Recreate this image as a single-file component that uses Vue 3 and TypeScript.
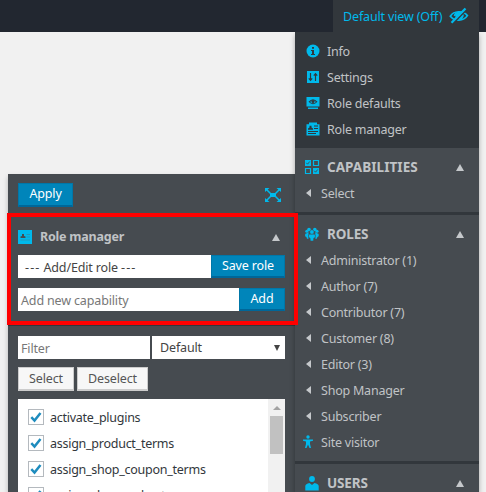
<script setup lang="ts">
const links = [
  { icon: 'info', label: 'Info' },
  { icon: 'settings', label: 'Settings' },
  { icon: 'defaults', label: 'Role defaults' },
  { icon: 'manager', label: 'Role manager' },
]
const roles: string[] = [
  'Administrator (1)', 'Author (7)', 'Contributor (7)', 'Customer (8)',
  'Editor (3)', 'Shop Manager', 'Subscriber',
]
const capabilities: string[] = [
  'activate_plugins', 'assign_product_terms', 'assign_shop_coupon_terms', 'assign_shop_order_terms',
]
</script>

<template>
  <div class="page">
    <header class="topbar">
      <div class="view-toggle">
        <span class="toggle-text">Default view (Off)</span>
        <svg class="eye" width="20" height="18" viewBox="0 0 20 18">
          <path d="M1.300 9.200C5 3.600 14 3.200 18.400 8.600C14.500 14.400 5.500 14.600 1.300 9.200Z" fill="none" stroke="#00b9eb" stroke-width="1.700" />
          <circle cx="10.500" cy="8.600" r="4.200" fill="#00b9eb" />
          <path d="M5.500 9Q6 6 9 5.500" fill="none" stroke="#00b9eb" stroke-width="1.600" />
          <path d="M3.600 16.800L17.500 2.600" stroke="#32373c" stroke-width="1.800" />
          <path d="M2.500 15.800L16.500 1.500" stroke="#00b9eb" stroke-width="2.300" />
        </svg>
      </div>
    </header>

    <aside class="menu">
      <nav class="links">
        <a v-for="l in links" :key="l.label" class="link">
          <svg width="14" height="14" viewBox="0 0 14 14">
            <g v-if="l.icon === 'info'">
              <circle cx="7" cy="7" r="6.500" fill="#00b9eb" />
              <path d="M6 3h2v1.800H6zM5 6h3v4h1v1H5v-1h1V7H5z" fill="#32373c" />
            </g>
            <g v-else-if="l.icon === 'settings'">
              <rect x="1" y="1" width="12" height="12" fill="#00b9eb" />
              <path d="M4.500 3v7M2.800 8.300l1.700 2 1.700-2M9.500 11V4M7.800 5.700l1.700-2 1.700 2" fill="none" stroke="#32373c" stroke-width="1.200" />
            </g>
            <g v-else-if="l.icon === 'defaults'">
              <path d="M.5 1h13v9.500H.5zM2 11.500h10V13H2z" fill="#00b9eb" />
              <path d="M2.500 5.800Q7 .8 11.500 5.800Q7 10.500 2.500 5.800Z" fill="#32373c" />
              <path d="M4 5.900Q7 3 10 5.900Q7 8.800 4 5.900Z" fill="#00b9eb" />
              <circle cx="7" cy="5.600" r="1.500" fill="#32373c" />
            </g>
            <g v-else>
              <path d="M.5 2.200H3V.5h8v1.700h2.500v11.300H.5z" fill="#00b9eb" />
              <path d="M2 7.800V6.500l1.500-1V3.800h2v1.700l1.500 1v1.300zM8 3.500h4v1H8zM8 6h4v1H8zM2 9h10v1H2zM2 11h8v1H2z" fill="#32373c" />
            </g>
          </svg>
          <span>{{ l.label }}</span>
        </a>
      </nav>

      <section class="group caps">
        <h2 class="heading">
          <svg width="16" height="16" viewBox="0 0 16 16">
            <path d="M1 1h6v6H1zM9 9h6v6H9z" fill="#00b9eb" />
            <path d="M9.500 1.500h5v5h-5zM1.500 9.500h5v5h-5z" fill="none" stroke="#00b9eb" stroke-width="1.200" />
            <path d="M2.300 3.800L3.600 5.200L5.700 2.500M10.300 11.800l1.300 1.400L13.700 10.500" fill="none" stroke="#464b50" stroke-width=".9" />
          </svg>
          <span class="wide">CAPABILITIES</span><i class="up"></i>
        </h2>
        <div class="item"><i class="left"></i><span>Select</span></div>
      </section>

      <section class="group">
        <h2 class="heading">
          <svg width="16" height="16" viewBox="0 0 16 16">
            <g fill="#00b9eb">
              <circle cx="5" cy="3.500" r="1.800" /><circle cx="10.800" cy="3.500" r="1.800" />
              <circle cx="2.800" cy="5.300" r="1.500" /><circle cx="13" cy="5.300" r="1.500" />
              <path d="M1 9Q1 7.200 2.800 7.200L4.500 6V12.800H3L2.400 11Q1 11 1 9ZM14.800 9Q14.800 7.200 13 7.200L11.300 6V12.800H12.800L13.400 11Q14.800 11 14.800 9Z" />
            </g>
            <g fill="#00b9eb" stroke="#464b50" stroke-width=".5">
              <path d="M4.500 9Q4.700 8 7.900 8Q11.100 8 11.300 9V11.500L9.800 12L9.400 15H6.400L6 12L4.500 11.500Z" />
              <circle cx="7.900" cy="6" r="2.200" />
            </g>
          </svg>
          <span>ROLES</span><i class="up"></i>
        </h2>
        <div v-for="r in roles" :key="r" class="item"><i class="left"></i><span>{{ r }}</span></div>
        <div class="item">
          <svg class="visitor" width="12" height="14" viewBox="0 0 12 14">
            <circle cx="6" cy="2" r="1.700" fill="#00b9eb" />
            <path d="M1 4.500h10v1.300L8 6.500v2.500l1 4H7.500L6 9.500 4.500 13H3l1-4V6.500L1 5.800z" fill="#00b9eb" />
          </svg>
          <span>Site visitor</span>
        </div>
      </section>

      <section class="group">
        <h2 class="heading">
          <svg width="16" height="16" viewBox="0 0 16 16">
            <circle cx="8" cy="4" r="2.900" fill="#00b9eb" />
            <path d="M1.300 15.500V11Q1.500 9 5.500 8L8 10L10.500 8Q14.500 9 14.700 11V15.500Z" fill="#00b9eb" />
          </svg>
          <span>USERS</span><i class="up"></i>
        </h2>
      </section>
    </aside>

    <main class="panel">
      <div class="apply-row">
        <button class="primary apply">Apply</button>
        <svg width="18" height="16" viewBox="0 0 18 16">
          <path d="M6 6h6v4H6zM1 1h4.500L1 5zM17 1h-4.500L17 5zM1 15h4.500L1 11zM17 15h-4.500l4.500-4z" fill="#00b9eb" />
          <path d="M2 2l4.500 4.500M16 2l-4.500 4.500M2 14l4.500-4.500M16 14l-4.500-4.500" stroke="#00b9eb" stroke-width="1.500" />
        </svg>
      </div>

      <section class="manager">
        <h3 class="manager-title">
          <svg width="14" height="14" viewBox="0 0 14 14">
            <path d="M0 0h14v14H0z" fill="#00b9eb" />
            <path d="M2.500 8V6.500L4 6V4h2v2l1.500.5V8z" fill="#464b50" />
            <path d="M8.500 4.500H12M8.500 7H12M2.500 10H12" stroke="#2b8fae" stroke-width=".8" />
          </svg>
          <span>Role manager</span><i class="up"></i>
        </h3>
        <div class="field"><div class="box role-select"><span class="dash">---</span> Add/Edit role <span class="dash">---</span></div><button class="primary save">Save role</button></div>
        <div class="field"><div class="box hint">Add new capability</div><button class="primary add">Add</button></div>
      </section>

      <section class="browse">
        <div class="filters">
          <div class="box filter hint">Filter</div>
          <div class="box sort"><span>Default</span><i class="caret"></i></div>
        </div>
        <div class="buttons">
          <button class="secondary sel">Select</button>
          <button class="secondary desel">Deselect</button>
        </div>
        <div class="list">
          <div class="entries">
            <label v-for="c in capabilities" :key="c" class="entry">
              <span class="check">
                <svg width="14" height="14" viewBox="0 0 14 14"><path d="M2.300 7.200L5.500 10.500L11.500 3" fill="none" stroke="#1e8cbe" stroke-width="2.500" /></svg>
              </span>
              <span>{{ c }}</span>
            </label>
          </div>
          <div class="scroll"><i class="scroll-up"></i><div class="thumb"></div></div>
        </div>
      </section>
      <div class="highlight"></div>
    </main>
  </div>
</template>

<style>
body { overflow: hidden; }
</style>

<style scoped>
* { box-sizing: border-box; }
.page {
  width: 486px; height: 492px; overflow: hidden; position: relative;
  background: #f1f1f1; color: #c0c3c6;
  display: grid; grid-template-columns: 8px 287px 184px 7px; grid-template-rows: 32px 142px 318px;
  font: 12.5px/26px "Noto Sans", "Open Sans", sans-serif; letter-spacing: -0.22px; white-space: nowrap;
}
.topbar { grid-column: 1 / -1; grid-row: 1; background: #222730; display: flex; justify-content: flex-end; padding-right: 7px; }
.view-toggle { width: 146px; background: #32373c; color: #00b9eb; display: flex; align-items: center; justify-content: space-between; padding: 0 10px; }
.toggle-text { margin-top: 1px; letter-spacing: -.15px; }
.menu { grid-column: 3; grid-row: 2 / 4; background: #464b50; box-shadow: 0 3px 5px rgba(0, 0, 0, .3); overflow: hidden; z-index: 1; clip-path: inset(0 -7px 0 -7px); }
.links { height: 116px; padding-top: 6px; background: #32373c; }
.link { display: flex; align-items: center; gap: 7px; height: 26px; padding-left: 11px; }
.link span, .item span { padding-top: 2px; }
.group { border-top: 3px solid #32373c; padding: 6px 0 6px; }
.caps { border: 0; }
.heading { height: 26px; margin: 0; display: flex; align-items: center; font-size: 13.5px; font-weight: 700; letter-spacing: -.15px; padding: 0 15px 0 9px; gap: 7px; }
.wide { letter-spacing: .05px; }
.up { margin-left: auto; border: 4px solid transparent; border-top: 0; border-bottom: 7px solid #c5c8cb; }
.left { width: 5px; height: 8px; border: 4px solid transparent; border-left: 0; border-right: 5px solid #c5c8cb; margin-right: 10px; }
.item { height: 26px; display: flex; align-items: center; padding-left: 11px; }
.visitor { margin: 0 7px 0 -4px; }
.panel { grid-column: 2; grid-row: 3; background: #464b50; position: relative; box-shadow: 0 3px 5px rgba(0, 0, 0, .25); }
.apply-row { display: flex; justify-content: space-between; align-items: center; height: 41px; padding: 0 13px 0 10px; }
button { font: 12.5px/20px "Noto Sans", "Open Sans", sans-serif; letter-spacing: -.15px; padding: 0; border-radius: 0; }
.primary { height: 24px; background: #0085ba; color: #fff; border: 1px solid #0077a8; border-bottom: 2px solid #006799; flex: none; }
.apply { width: 55px; }
.manager { border-top: 2px solid #32373c; height: 111px; padding: 7px 10px 0; }
.manager-title { display: flex; align-items: center; height: 26px; margin: 0 5px 5px 0; gap: 8px; font-size: 12.5px; letter-spacing: -.22px; font-weight: 700; }
.field { display: flex; height: 23px; margin-bottom: 10px; }
.field button { height: 23px; }
.box { background: #fff; color: #444; line-height: 25px; height: 23px; padding-left: 3px; flex: 1; letter-spacing: -.15px; }
.role-select { padding-left: 7px; }
.dash { letter-spacing: 1.1px; }
.hint { color: #777; }
.save { width: 74px; }
.add { width: 46px; }
.browse { padding: 10px 10px 0; border-top: 2px solid #32373c; margin-top: -2px; }
.filters { display: flex; gap: 2px; height: 23px; margin-bottom: 8px; }
.filter { flex: 0 0 132px; }
.sort { display: flex; align-items: center; justify-content: space-between; padding: 0 5px 0 8px; }
.caret { border: 3px solid transparent; border-bottom: 0; border-top: 6px solid #444; }
.buttons { display: flex; gap: 3px; height: 24px; margin-bottom: 8px; }
.secondary { background: #f7f7f7; border: 1px solid #ccc; border-bottom-width: 2px; color: #555; height: 24px; }
.sel { width: 56px; }
.desel { width: 71px; }
.list { display: flex; height: 100px; background: #fff; color: #32373c; }
.entries { flex: 1; padding: 5px 10px; }
.entry { display: flex; align-items: center; height: 26px; gap: 6px; }
.entry > span:last-child { padding-top: 2px; letter-spacing: -.26px; }
.check { width: 16px; height: 16px; border: 1px solid #b4b9be; display: flex; flex: none; }
.scroll { width: 17px; background: #f1f1f1; display: flex; flex-direction: column; align-items: center; padding-top: 7px; }
.scroll-up { border: 4px solid transparent; border-top: 0; border-bottom: 4px solid #a3a3a3; margin-bottom: 6px; }
.thumb { width: 13px; height: 38px; background: #c1c1c1; }
.highlight { position: absolute; z-index: 3; left: -1px; top: 39px; width: 291px; height: 112px; border: 4px solid #f00; }
</style>
